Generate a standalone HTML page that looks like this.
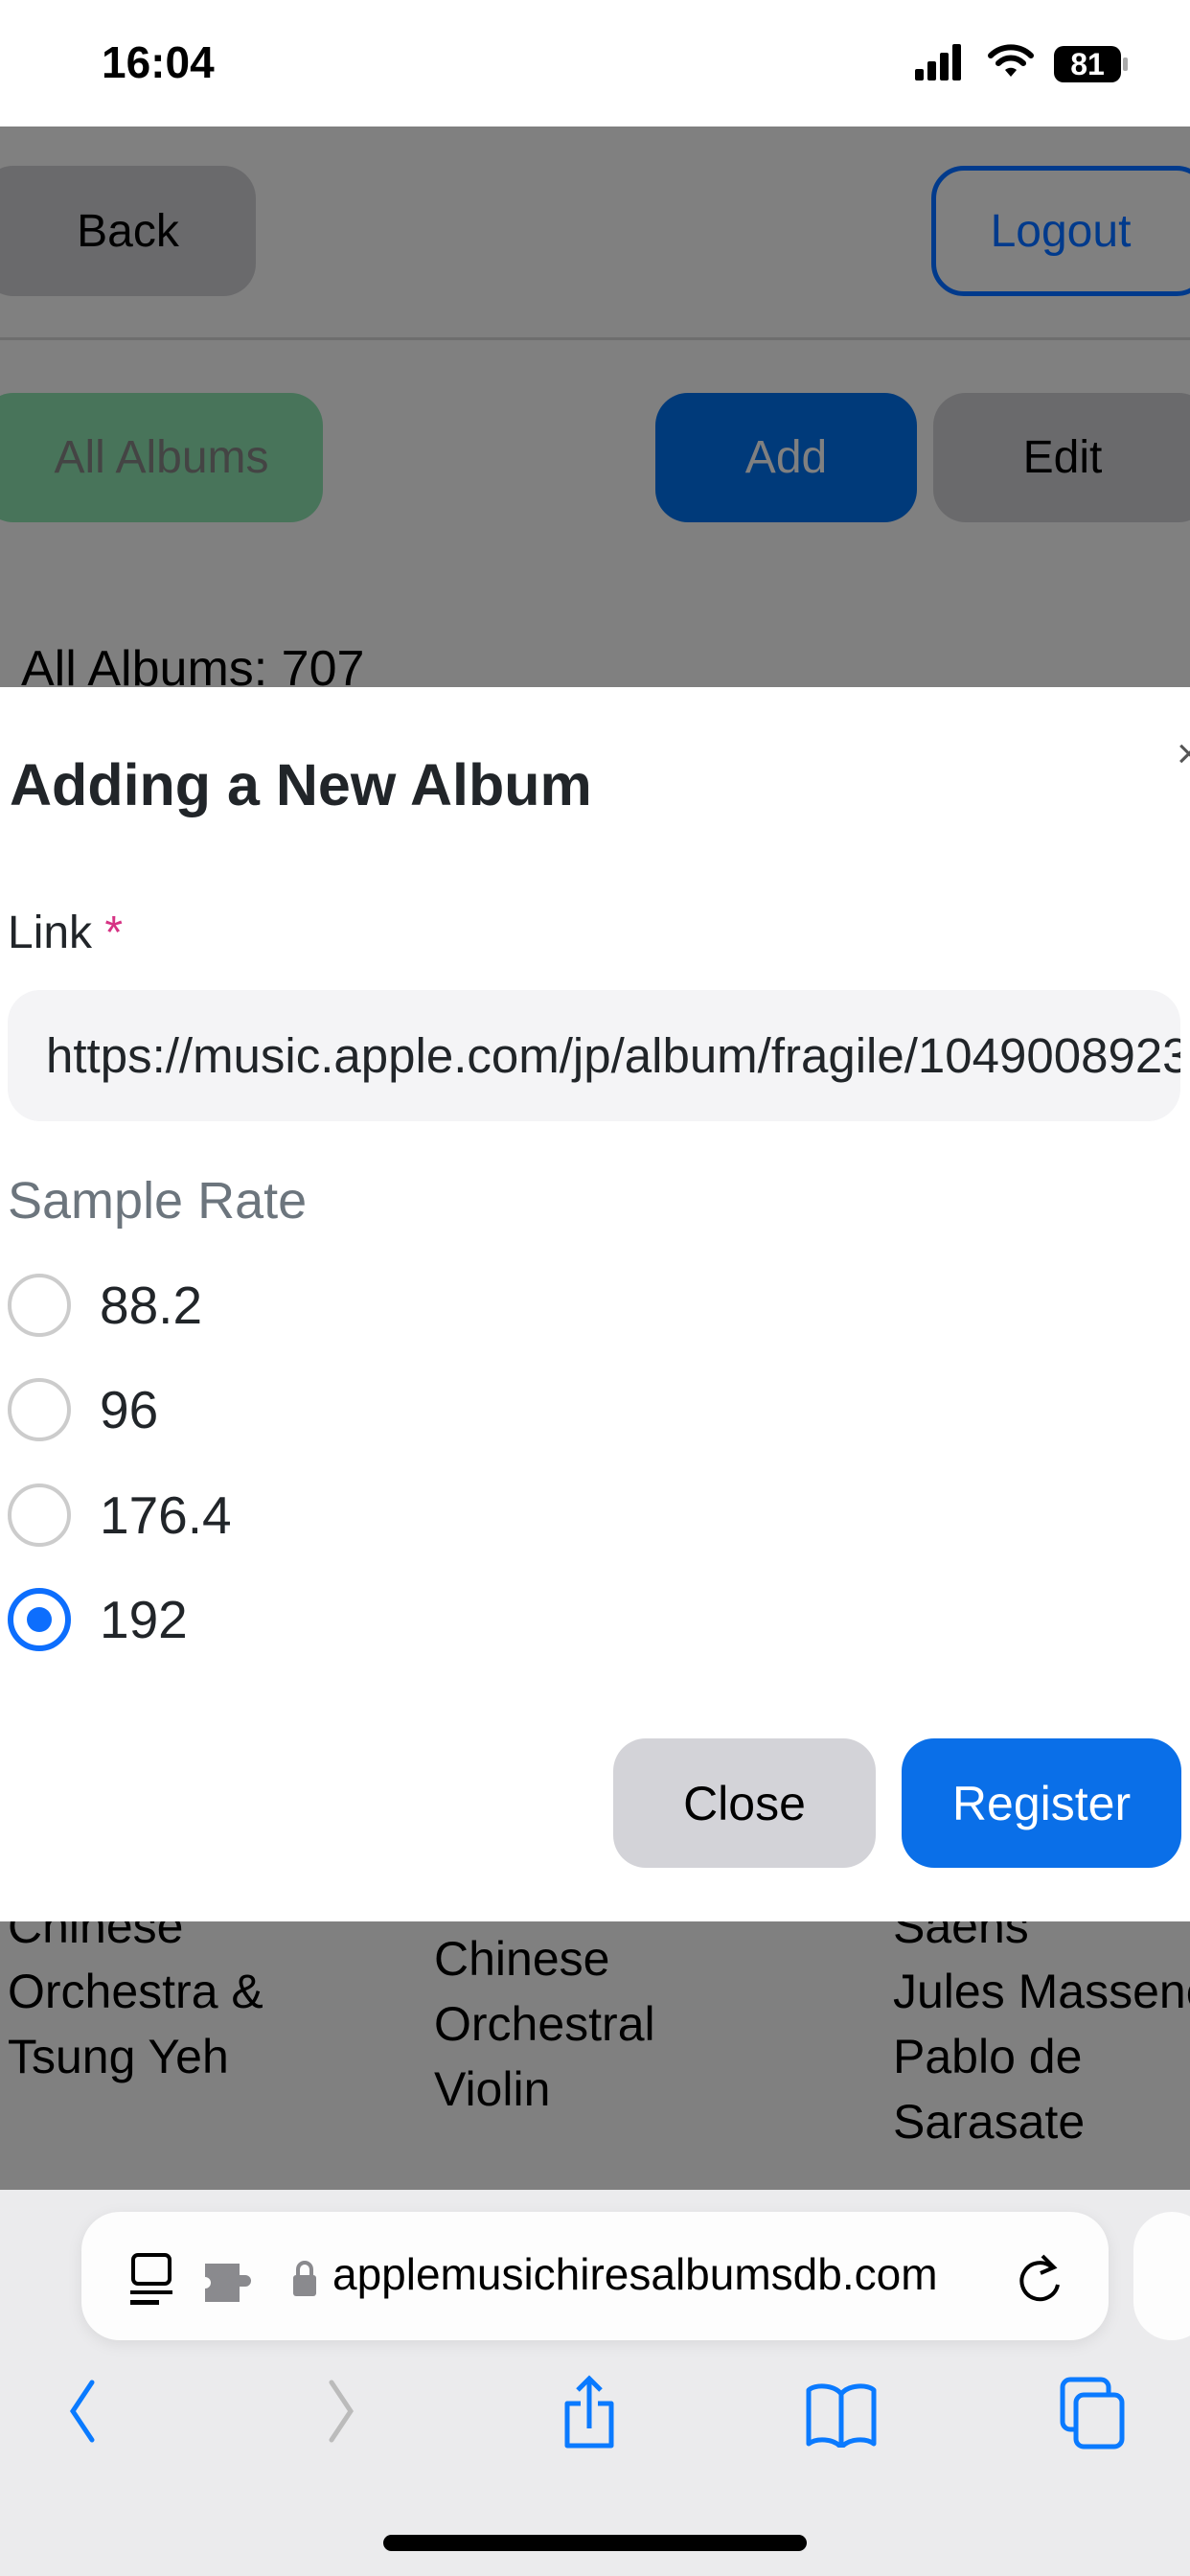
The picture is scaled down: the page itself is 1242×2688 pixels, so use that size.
<!DOCTYPE html>
<html><head><meta charset="utf-8"><style>
*{margin:0;padding:0;box-sizing:border-box}
body{width:1242px;height:2688px;position:relative;overflow:hidden;font-family:"Liberation Sans",sans-serif;background:#808080}
.a{position:absolute}
.btn{position:absolute;border-radius:34px;display:flex;align-items:center;justify-content:center;font-size:48px}
</style></head><body>
<div class="a" style="left:0;top:0;width:1242px;height:132px;background:#fff"></div>
<div class="a" style="left:106px;top:38px;font-size:46px;font-weight:bold;color:#000">16:04</div>
<svg class="a" style="left:955px;top:46px" width="60" height="40"><rect x="0" y="26" width="9" height="12" rx="2"/><rect x="13" y="18" width="9" height="20" rx="2"/><rect x="26" y="9" width="9" height="29" rx="2"/><rect x="39" y="0" width="9" height="38" rx="2"/></svg>
<svg class="a" style="left:1030px;top:44px" width="50" height="40" viewBox="0 0 50 40"><path d="M4 14a30 30 0 0 1 42 0" stroke="#000" stroke-width="6" fill="none" stroke-linecap="round"/><path d="M12 22a18 18 0 0 1 26 0" stroke="#000" stroke-width="6" fill="none" stroke-linecap="round"/><path d="M19 29l6 7 6-7a9 9 0 0 0-12 0z"/></svg>
<div class="a" style="left:1100px;top:48px;width:70px;height:38px;background:#000;border-radius:10px;color:#fff;font-size:32px;font-weight:bold;text-align:center;line-height:38px">81</div>
<div class="a" style="left:1172px;top:60px;width:5px;height:14px;background:#aaa;border-radius:2px"></div>

<div class="btn" style="left:-20px;top:173px;width:287px;height:136px;background:#6a6a6c;color:#000;padding-left:20px">Back</div>
<div class="btn" style="left:972px;top:173px;width:290px;height:136px;border:5px solid #003a8c;color:#003a8c;padding-right:20px">Logout</div>
<div class="a" style="left:0;top:352px;width:1242px;height:3px;background:#6e6e6e"></div>
<div class="btn" style="left:-20px;top:410px;width:357px;height:135px;background:#48745a;color:#444;padding-left:20px">All Albums</div>
<div class="btn" style="left:684px;top:410px;width:273px;height:135px;background:#003a7a;color:#808080">Add</div>
<div class="btn" style="left:974px;top:410px;width:290px;height:135px;background:#6a6a6c;color:#000;padding-right:20px">Edit</div>
<div class="a" style="left:22px;top:668px;font-size:52px;color:#000">All Albums: 707</div>

<div class="a" style="left:0;top:717px;width:1242px;height:1288px;background:#fff"></div>
<div class="a" style="left:10px;top:784px;font-size:61px;font-weight:bold;color:#212529">Adding a New Album</div>
<div class="a" style="left:1228px;top:762px;font-size:44px;color:#555">×</div>
<div class="a" style="left:8px;top:946px;font-size:48px;color:#212529">Link <span style="color:#d63384">*</span></div>
<div class="a" style="left:8px;top:1033px;width:1224px;height:137px;background:#f4f4f6;border-radius:34px;overflow:hidden;white-space:nowrap;font-size:51px;line-height:137px;padding-left:40px;color:#212529">https://music.apple.com/jp/album/fragile/1049008923</div>
<div class="a" style="left:8px;top:1222px;font-size:54px;color:#6c757d">Sample Rate</div>
<div class="a" style="left:8px;top:1329px;width:66px;height:66px;border:4px solid #ccc;border-radius:50%"></div>
<div class="a" style="left:104px;top:1330px;font-size:55px;color:#212529">88.2</div>
<div class="a" style="left:8px;top:1438px;width:66px;height:66px;border:4px solid #ccc;border-radius:50%"></div>
<div class="a" style="left:104px;top:1439px;font-size:55px;color:#212529">96</div>
<div class="a" style="left:8px;top:1548px;width:66px;height:66px;border:4px solid #ccc;border-radius:50%"></div>
<div class="a" style="left:104px;top:1549px;font-size:55px;color:#212529">176.4</div>
<div class="a" style="left:8px;top:1657px;width:66px;height:66px;border:6px solid #0d6efd;border-radius:50%;background:#fff"><div style="margin:14px;width:26px;height:26px;border-radius:50%;background:#0d6efd"></div></div>
<div class="a" style="left:104px;top:1658px;font-size:55px;color:#212529">192</div>
<div class="btn" style="left:640px;top:1814px;width:274px;height:135px;background:#d3d3d8;color:#000;font-size:50px">Close</div>
<div class="btn" style="left:941px;top:1814px;width:292px;height:135px;background:#0a6fe8;color:#fff;font-size:50px">Register</div>

<div class="a" style="left:8px;top:1976px;font-size:50px;line-height:68px;color:#000;clip-path:inset(29px 0 0 0)">Chinese<br>Orchestra &amp;<br>Tsung Yeh</div>
<div class="a" style="left:453px;top:2010px;font-size:50px;line-height:68px;color:#000">Chinese<br>Orchestral<br>Violin</div>
<div class="a" style="left:932px;top:1976px;font-size:50px;line-height:68px;color:#000;white-space:nowrap;clip-path:inset(29px 0 0 0)">Saens<br>Jules Massenet<br>Pablo de<br>Sarasate</div>

<div class="a" style="left:0;top:2285px;width:1242px;height:403px;background:#ebebed"></div>
<div class="a" style="left:85px;top:2308px;width:1072px;height:134px;background:#fdfdfd;border-radius:40px;box-shadow:0 4px 16px rgba(0,0,0,.08)"></div>
<div class="a" style="left:1183px;top:2308px;width:80px;height:134px;background:#fdfdfd;border-radius:40px"></div>
<svg class="a" style="left:136px;top:2350px" width="48" height="58"><rect x="3" y="3" width="38" height="30" rx="5" stroke="#000" stroke-width="4" fill="none"/><rect x="0" y="40" width="44" height="4" fill="#000"/><rect x="0" y="50" width="30" height="5" fill="#000"/></svg>
<svg class="a" style="left:214px;top:2358px" width="50" height="46"><path d="M0 4h36v12h6a6 6 0 0 1 0 12h-6v16H0V30a6 6 0 0 0 0-12z" fill="#8a8a8e"/></svg>
<svg class="a" style="left:304px;top:2358px" width="28" height="40"><path d="M7 16V10a7 7 0 0 1 14 0v6" stroke="#8a8a8e" stroke-width="4" fill="none"/><rect x="2" y="16" width="24" height="22" rx="3" fill="#8a8a8e"/></svg>
<div class="a" style="left:347px;top:2346px;font-size:46px;color:#000">applemusichiresalbumsdb.com</div>
<svg class="a" style="left:1064px;top:2350px" width="52" height="64"><path d="M34 16A19 19 0 1 0 40 34" stroke="#000" stroke-width="4" fill="none" transform="rotate(0)"/><path d="M24 4l12 12-14 6" stroke="#000" stroke-width="4" fill="none"/></svg>
<svg class="a" style="left:66px;top:2480px" width="40" height="70"><path d="M30 6L10 36l20 30" stroke="#0a7aff" stroke-width="5" fill="none" stroke-linecap="round"/></svg>
<svg class="a" style="left:336px;top:2480px" width="40" height="70"><path d="M10 6l20 30-20 30" stroke="#bbb" stroke-width="5" fill="none" stroke-linecap="round"/></svg>
<svg class="a" style="left:584px;top:2478px" width="62" height="80"><path d="M31 4v52M19 16L31 4l12 12" stroke="#0a7aff" stroke-width="5" fill="none"/><path d="M22 30H8v44h46V30H40" stroke="#0a7aff" stroke-width="5" fill="none" stroke-linejoin="round"/></svg>
<svg class="a" style="left:840px;top:2484px" width="76" height="70"><path d="M38 14C30 4 10 4 4 10v56c8-6 26-6 34 4 8-10 26-10 34-4V10C66 4 46 4 38 14zM38 14v56" stroke="#0a7aff" stroke-width="5" fill="none" stroke-linejoin="round"/></svg>
<svg class="a" style="left:1106px;top:2480px" width="70" height="76"><rect x="3" y="3" width="48" height="52" rx="8" stroke="#0a7aff" stroke-width="5" fill="none"/><rect x="17" y="19" width="48" height="54" rx="8" stroke="#0a7aff" stroke-width="5" fill="#ebebed"/></svg>
<div class="a" style="left:400px;top:2645px;width:442px;height:17px;background:#000;border-radius:9px"></div>
</body></html>
